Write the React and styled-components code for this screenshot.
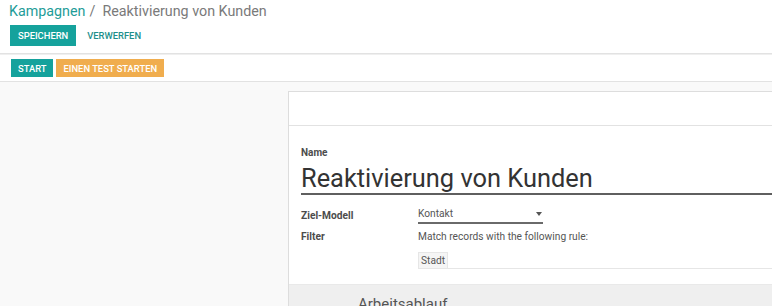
import React from "react";
import styled, { createGlobalStyle } from "styled-components";

const GlobalStyle = createGlobalStyle`
	html, body {
		margin: 0;
		padding: 0;
		background: #ffffff;
		font-family: Roboto, "Noto Sans", sans-serif;
		overflow: hidden;
	}
`;

const Page = styled.div`
	width: 772px;
	height: 306px;
	display: flex;
	flex-direction: column;
	overflow: hidden;
`;

const ControlPanel = styled.div`
	padding: 2px 10px 7px 9px;
	border-bottom: 1px solid #e2e2e2;
	box-shadow: 0 1px 0 #efefef;
`;

const Breadcrumb = styled.div`
	font-size: 14.3px;
	line-height: 18px;
	color: #7a7a7a;
	white-space: nowrap;
`;

const Crumb = styled.span`
	color: #1e9c98;
`;

const Separator = styled.span`
	color: #7a7a7a;
	margin: 0 7px 0 4px;
`;

const ButtonRow = styled.div`
	display: flex;
	align-items: center;
	gap: ${props => props.gap || 0}px;
	margin-top: ${props => props.top || 0}px;
	padding-left: 1px;
`;

const Button = styled.button`
	font-family: Roboto, "Noto Sans", sans-serif;
	font-size: 9.4px;
	font-weight: 500;
	text-transform: uppercase;
	height: ${props => props.h || 21}px;
	padding: 0 ${props => props.px || 8}px;
	border: none;
	border-radius: 0;
	cursor: pointer;
	background: ${props =>
		props.kind === "primary"
			? "#15a29c"
			: props.kind === "warning"
			? "#f0ad4e"
			: "transparent"};
	color: ${props => (props.kind === "link" ? "#1e8f8b" : "#ffffff")};
`;

const StatusBar = styled.div`
	padding: 5px 10px 4px 10px;
	border-bottom: 1px solid #e2e2e2;
`;

const Content = styled.div`
	flex: 1;
	background: #f9f9f9;
	padding: 9px 0 0 288px;
`;

const Sheet = styled.div`
	background: #ffffff;
	border: 1px solid #dddddd;
	border-right: none;
	border-bottom: none;
`;

const SheetHeader = styled.div`
	height: 33px;
	border-bottom: 1px solid #e2e2e2;
`;

const SheetBody = styled.div`
	padding: 21px 0 15px 12px;
`;

const FieldLabel = styled.div`
	font-size: 10px;
	font-weight: 700;
	color: #4c4c4c;
	line-height: 12px;
`;

const Title = styled.div`
	font-size: 25.4px;
	line-height: 30px;
	color: #333333;
	margin-top: 4px;
	border-bottom: 2px solid #5f5f5f;
`;

const FieldGrid = styled.div`
	display: grid;
	grid-template-columns: 117px 1fr;
	margin-top: 10px;
`;

const GridLabel = styled.div`
	font-size: 10.2px;
	font-weight: 700;
	color: #4c4c4c;
	line-height: 21px;
`;

const Select = styled.div`
	width: 125px;
	margin-top: 1px;
	display: flex;
	align-items: center;
	justify-content: space-between;
	font-size: 10.2px;
	color: #555555;
	line-height: 16px;
	border-bottom: 2px solid #6a6a6a;
`;

const Caret = styled.span`
	width: 0;
	height: 0;
	border-left: 3.5px solid transparent;
	border-right: 3.5px solid transparent;
	border-top: 4px solid #555555;
	margin-right: 1px;
`;

const FieldText = styled.div`
	font-size: 10.2px;
	color: #555555;
	line-height: 21px;
`;

const DomainBox = styled.div`
	margin-top: 5px;
	display: flex;
	border-bottom: 1px solid #e6e6e6;
`;

const Tag = styled.span`
	font-size: 10.2px;
	color: #555555;
	line-height: 15px;
	padding: 0 2px;
	background: #f5f5f5;
	border: 1px solid #e6e6e6;
	border-bottom: none;
`;

const Notebook = styled.div`
	background: #efefef;
	border-top: 1px solid #e9e9e9;
	padding: 9px 0 0 69px;
	height: 40px;
`;

const TabTitle = styled.div`
	font-size: 15px;
	line-height: 20px;
	color: #555555;
`;

const App = () => (
	<Page>
		<GlobalStyle />
		<ControlPanel>
			<Breadcrumb>
				<Crumb>Kampagnen</Crumb>
				<Separator>/</Separator>
				Reaktivierung von Kunden
			</Breadcrumb>
			<ButtonRow top={5} gap={3}>
				<Button kind="primary">Speichern</Button>
				<Button kind="link">Verwerfen</Button>
			</ButtonRow>
		</ControlPanel>
		<StatusBar>
			<ButtonRow gap={3}>
				<Button kind="primary" h={18} px={7}>
					Start
				</Button>
				<Button kind="warning" h={18} px={7}>
					Einen Test starten
				</Button>
			</ButtonRow>
		</StatusBar>
		<Content>
			<Sheet>
				<SheetHeader />
				<SheetBody>
					<FieldLabel>Name</FieldLabel>
					<Title>Reaktivierung von Kunden</Title>
					<FieldGrid>
						<GridLabel>Ziel-Modell</GridLabel>
						<div>
							<Select>
								Kontakt
								<Caret />
							</Select>
						</div>
						<GridLabel>Filter</GridLabel>
						<div>
							<FieldText>Match records with the following rule:</FieldText>
							<DomainBox>
								<Tag>Stadt</Tag>
							</DomainBox>
						</div>
					</FieldGrid>
				</SheetBody>
				<Notebook>
					<TabTitle>Arbeitsablauf</TabTitle>
				</Notebook>
			</Sheet>
		</Content>
	</Page>
);

export default App;
